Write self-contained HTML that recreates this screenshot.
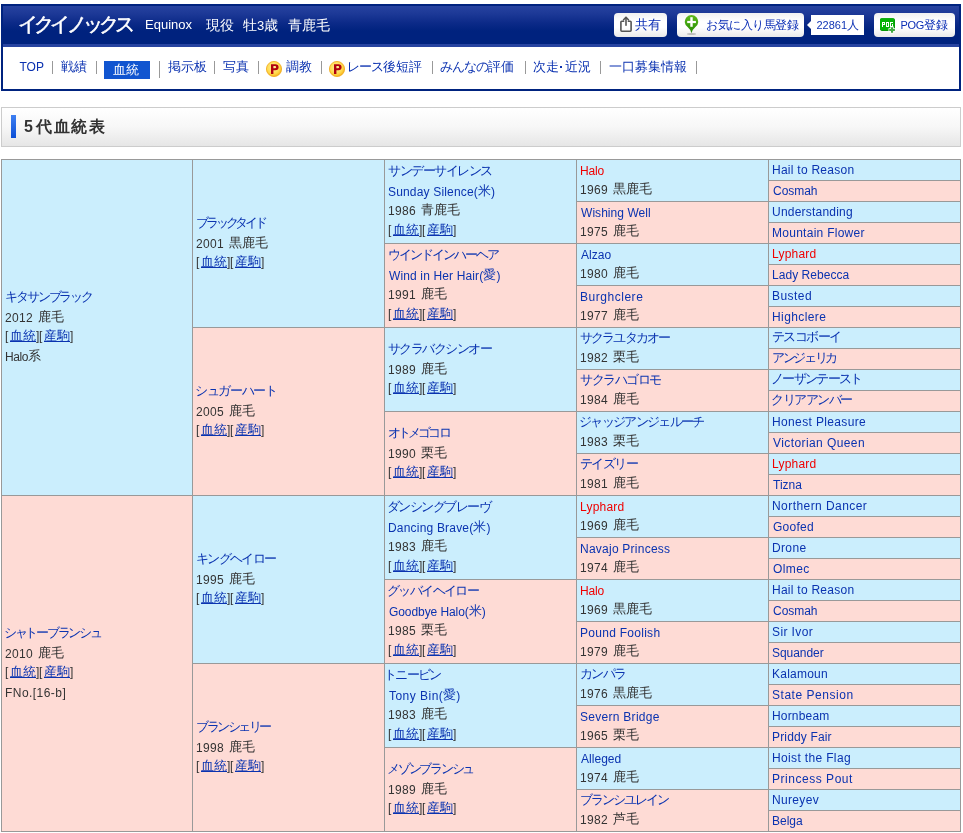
<!DOCTYPE html>
<html lang="ja">
<head>
<meta charset="utf-8">
<title>イクイノックス 5代血統表</title>
<style>
html,body{margin:0;padding:0;background:#fff;}
body{will-change:transform;width:963px;height:833px;position:relative;overflow:hidden;font-family:"Liberation Sans",sans-serif;font-size:13px;color:#333;}
*{box-sizing:border-box;}
a{text-decoration:none;}
.abs{position:absolute;white-space:nowrap;}

/* ---------- header ---------- */
#head{position:absolute;left:1px;top:4px;width:960px;height:87px;border:2px solid #00237f;background:#fff;}
#band{position:absolute;left:0;top:0;width:956px;height:38px;background:linear-gradient(#2743a0 0px,#1c3896 8px,#0c2a88 17px,#00227e 25px,#00227e 38px);}
#strip{position:absolute;left:0;top:38px;width:956px;height:3px;background:#2743a0;}
#title{left:15px;top:4.5px;height:26px;line-height:26px;font-size:20px;font-weight:normal;-webkit-text-stroke:0.55px #fff;color:#fff;letter-spacing:-3.8px;}
.sub{color:#fff;font-size:14px;height:20px;line-height:20px;top:9px;}
.sub.en{font-size:13px;}

.btn{position:absolute;top:7px;height:24px;border-radius:4px;background:linear-gradient(#f1f1f1 0%,#ffffff 35%,#ffffff 60%,#e9e9e9 100%);color:#0a2db5;white-space:nowrap;}
.btn > span{position:absolute;top:0;height:24px;line-height:24px;}
#balloon{position:absolute;left:808px;top:9px;width:53px;height:20px;background:#fff;color:#1035b5;}
#balloon:before{content:"";position:absolute;left:-4px;top:6px;border-style:solid;border-width:4px 4px 4px 0;border-color:transparent #fff transparent transparent;}
#balloon .bt{position:absolute;top:0;height:20px;line-height:20px;white-space:nowrap;}

/* ---------- nav ---------- */
.nv{position:absolute;top:51px;height:20px;line-height:20px;font-size:13px;color:#0a31b0;white-space:nowrap;}
.nv .k{letter-spacing:-1px;}
.sp{position:absolute;top:55px;width:1px;height:13px;background:#999;}
.dot{display:inline-block;width:6px;height:2px;vertical-align:3px;position:relative;}
.dot:before{content:"";position:absolute;left:1px;top:0;width:2px;height:2px;background:#0a31b0;}
#cur{position:absolute;left:101px;top:55px;width:46px;height:18px;background:#1155d0;color:#fff;font-size:13px;line-height:18px;text-align:center;padding-right:2px;}

/* ---------- section title ---------- */
#sec{position:absolute;left:1px;top:107px;width:960px;height:40px;border:1px solid #ccc;background:linear-gradient(#ffffff 0%,#f7f7f7 50%,#e6e6e6 100%);}
#bar{position:absolute;left:9px;top:7px;width:5px;height:23px;background:linear-gradient(#3f80f2,#0c4fd6);}
#sect,#sect2{left:22px;top:8px;height:22px;line-height:22px;font-size:16px;font-weight:bold;color:#333;}
#sect2{left:34px;letter-spacing:1.7px;}

/* ---------- table ---------- */
#ped{position:absolute;left:1px;top:159px;width:960px;border-collapse:collapse;table-layout:fixed;font-size:13px;line-height:19.5px;color:#333;}
#ped tr{height:21px;}
#ped td{border:1px solid #999;padding:0 0 0 4px;vertical-align:top;white-space:nowrap;overflow:hidden;}
#ped td.m{background:#cbeefd;}
#ped td.f{background:#fedbd5;}
#ped td.g0{width:191px;}
#ped td.g1,#ped td.g2,#ped td.g3,#ped td.g4{width:192px;}
#ped .a{color:#0a33b0;}
#ped .r{color:#f00000;}
#ped .u{text-decoration:underline;text-decoration-thickness:1px;text-underline-offset:1px;}
#ped .b{display:inline-block;width:4px;font-size:12px;line-height:1;position:relative;top:-1.5px;}
#ped .bl{text-indent:-1px;}
#ped .y{word-spacing:1px;margin-left:-1px;}
#ped .y .e{letter-spacing:0.3px;}
.e{font-size:12px;}
#ped .ln{height:19px;line-height:19px;}
#ped .ln a,#ped .ln span{line-height:1;}
#ped .k,#ped .j{position:relative;top:-1px;}
</style>
</head>
<body>

<div id="head">
  <div id="band"></div>
  <div id="strip"></div>
  <div id="title" class="abs">イクイノックス</div>
  <div class="abs sub en" style="left:142px;">Equinox</div>
  <div class="abs sub" style="left:203px;">現役</div>
  <div class="abs sub" style="left:240px;">牡<span style="font-size:13px">3</span>歳</div>
  <div class="abs sub" style="left:285px;">青鹿毛</div>

  <!-- share button -->
  <div class="btn" style="left:611px;width:53px;">
    <svg style="position:absolute;left:5px;top:3px" width="14" height="17" viewBox="0 0 14 17">
      <path d="M4.6 5.2 H2.8 Q1.9 5.2 1.9 6.1 V14.3 Q1.9 15.2 2.8 15.2 H11.2 Q12.1 15.2 12.1 14.3 V6.1 Q12.1 5.2 11.2 5.2 H9.4" fill="none" stroke="#555" stroke-width="1.6" stroke-linecap="round"/>
      <path d="M7 1.6 V9.2" fill="none" stroke="#555" stroke-width="1.6" stroke-linecap="round"/>
      <path d="M4.6 3.8 L7 1.3 L9.4 3.8" fill="none" stroke="#555" stroke-width="1.6" stroke-linecap="round" stroke-linejoin="round"/>
    </svg>
    <span style="left:20.5px;font-size:13px;">共有</span>
  </div>

  <!-- favourite button -->
  <div class="btn" style="left:674px;width:127px;">
    <svg style="position:absolute;left:6px;top:1px" width="17" height="22" viewBox="0 0 17 22">
      <defs><linearGradient id="gg" x1="0" y1="0" x2="0" y2="1"><stop offset="0" stop-color="#62bb1f"/><stop offset="0.6" stop-color="#3a9d0c"/><stop offset="1" stop-color="#2b8a06"/></linearGradient></defs>
      <ellipse cx="8.5" cy="20" rx="4.6" ry="1.1" fill="#bdbdbd"/>
      <path d="M8.5 19.2 Q7.6 15.6 4.6 13.1 A6.7 6.7 0 1 1 12.4 13.1 Q9.4 15.6 8.5 19.2 Z" fill="url(#gg)"/>
      <rect x="4.2" y="6.9" width="8.7" height="2.2" fill="#fff"/>
      <rect x="7.3" y="3.2" width="2.4" height="9.6" fill="#fff"/>
    </svg>
    <span style="left:29px;font-size:12px;letter-spacing:-0.5px;">お気に入り馬登録</span>
  </div>

  <div id="balloon"><span class="bt" style="left:5.5px;"><span style="font-size:11px;">22861</span><span style="font-size:12px;">人</span></span></div>

  <!-- POG button -->
  <div class="btn" style="left:871px;width:81px;">
    <svg style="position:absolute;left:6px;top:5px" width="17" height="16" viewBox="0 0 17 16"><rect x="0" y="0.2" width="15" height="12.7" rx="1.8" fill="#078f07"/><rect x="0" y="0.2" width="14.3" height="12" rx="1.6" fill="#07b307"/><g fill="#fff"><rect x="2" y="4" width="1" height="1"/><rect x="3" y="4" width="1" height="1"/><rect x="4" y="4" width="1" height="1"/><rect x="2" y="5" width="1" height="1"/><rect x="4" y="5" width="1" height="1"/><rect x="2" y="6" width="1" height="1"/><rect x="3" y="6" width="1" height="1"/><rect x="4" y="6" width="1" height="1"/><rect x="2" y="7" width="1" height="1"/><rect x="2" y="8" width="1" height="1"/><rect x="6" y="4" width="1" height="1"/><rect x="7" y="4" width="1" height="1"/><rect x="8" y="4" width="1" height="1"/><rect x="6" y="5" width="1" height="1"/><rect x="8" y="5" width="1" height="1"/><rect x="6" y="6" width="1" height="1"/><rect x="8" y="6" width="1" height="1"/><rect x="6" y="7" width="1" height="1"/><rect x="8" y="7" width="1" height="1"/><rect x="6" y="8" width="1" height="1"/><rect x="7" y="8" width="1" height="1"/><rect x="8" y="8" width="1" height="1"/><rect x="10" y="4" width="1" height="1"/><rect x="11" y="4" width="1" height="1"/><rect x="12" y="4" width="1" height="1"/><rect x="10" y="5" width="1" height="1"/><rect x="10" y="6" width="1" height="1"/><rect x="12" y="6" width="1" height="1"/><rect x="10" y="7" width="1" height="1"/><rect x="12" y="7" width="1" height="1"/><rect x="10" y="8" width="1" height="1"/><rect x="11" y="8" width="1" height="1"/><rect x="12" y="8" width="1" height="1"/></g><path d="M10.4 8.4 h3.3 v1.9 h1.9 v3.3 h-1.9 v1.9 h-3.3 v-1.9 h-1.9 v-3.3 h1.9 z" fill="#fff"/><path d="M11 9.2 h2.1 v1.7 h1.8 v2.1 h-1.8 v1.8 h-2.1 v-1.8 h-1.8 v-2.1 h1.8 z" fill="#3fa83f"/></svg>
    <span style="left:26.5px;font-size:12px;"><span style="font-size:11px;letter-spacing:-0.3px">POG</span>登録</span>
  </div>

  <!-- nav -->
  <div class="nv" style="left:16.5px;font-size:12px;">TOP</div>
  <div class="sp" style="left:49px;"></div>
  <div class="nv" style="left:58px;">戦績</div>
  <div class="sp" style="left:93px;"></div>
  <div id="cur">血統</div>
  <div class="sp" style="left:156px;height:17px;"></div>
  <div class="nv" style="left:165px;">掲示板</div>
  <div class="sp" style="left:211px;"></div>
  <div class="nv" style="left:220px;">写真</div>
  <div class="sp" style="left:255px;"></div>
  <svg class="pi" style="position:absolute;left:263px;top:55px" width="16" height="16" viewBox="0 0 16 16"><circle cx="8" cy="8" r="7.6" fill="url(#pg)" stroke="#f0a81a" stroke-width="0.8"/><path d="M5 3.2 H9.3 Q12.6 3.2 12.6 6.2 Q12.6 9.2 9.3 9.2 H7.4 V13 H5 Z M7.4 5.1 V7.3 H9 Q10.2 7.3 10.2 6.2 Q10.2 5.1 9 5.1 Z" fill="#b0000f" fill-rule="evenodd"/></svg>
  <div class="nv" style="left:283px;">調教</div>
  <div class="sp" style="left:318px;"></div>
  <svg class="pi" style="position:absolute;left:326px;top:55px" width="16" height="16" viewBox="0 0 16 16"><circle cx="8" cy="8" r="7.6" fill="url(#pg)" stroke="#f0a81a" stroke-width="0.8"/><path d="M5 3.2 H9.3 Q12.6 3.2 12.6 6.2 Q12.6 9.2 9.3 9.2 H7.4 V13 H5 Z M7.4 5.1 V7.3 H9 Q10.2 7.3 10.2 6.2 Q10.2 5.1 9 5.1 Z" fill="#b0000f" fill-rule="evenodd"/></svg>
  <div class="nv" style="left:343.5px;"><span class="k">レース</span>後短評</div>
  <div class="sp" style="left:429px;"></div>
  <div class="nv" style="left:437px;"><span class="k">みんなの</span>評価</div>
  <div class="sp" style="left:522px;"></div>
  <div class="nv" style="left:530px;">次走<i class="dot"></i>近況</div>
  <div class="sp" style="left:597px;"></div>
  <div class="nv" style="left:606px;">一口募集情報</div>
  <div class="sp" style="left:693px;"></div>
</div>

<svg width="0" height="0" style="position:absolute">
  <defs>
    <radialGradient id="pg" cx="0.45" cy="0.4" r="0.6"><stop offset="0" stop-color="#fff3a0"/><stop offset="0.7" stop-color="#ffd84a"/><stop offset="1" stop-color="#f6b21c"/></radialGradient>
    
  </defs>
</svg>

<div id="sec">
  <div id="bar"></div>
  <div id="sect" class="abs">5</div><div id="sect2" class="abs">代血統表</div>
</div>

<table id="ped">
<tr><td class="m g0" rowspan="16"><div class="ln" style="margin-top:128px"><a class="a" style="margin-left:-1px"><span class="k" style="letter-spacing:-2.11px">キタサンブラック</span></a></div><div class="ln" style="margin-top:1px"><span class="y"><span class="e">2012 </span><span class="j">鹿毛</span></span></div><div class="ln"><span class="b bl">[</span><a class="a u j">血統</a><span class="b">]</span><span class="b bl">[</span><a class="a u j">産駒</a><span class="b">]</span></div><div class="ln" style="margin-top:1px"><span style="margin-left:-1px"><span class="e" style="letter-spacing:-0.4px">Halo</span><span class="j">系</span></span></div></td><td class="m g1" rowspan="8"><div class="ln" style="margin-top:54px"><a class="a" style="margin-left:-1px"><span class="k" style="letter-spacing:-3.13px">ブラックタイド</span></a></div><div class="ln" style="margin-top:1px"><span class="y"><span class="e">2001 </span><span class="j">黒鹿毛</span></span></div><div class="ln"><span class="b bl">[</span><a class="a u j">血統</a><span class="b">]</span><span class="b bl">[</span><a class="a u j">産駒</a><span class="b">]</span></div></td><td class="m g2" rowspan="4"><div class="ln" style="margin-top:2px"><a class="a" style="margin-left:-1px"><span class="k" style="letter-spacing:-1.45px">サンデーサイレンス</span></a></div><div class="ln" style="margin-top:1px"><a class="a" style="margin-left:-1px"><span class="e" style="letter-spacing:0.17px">Sunday Silence(</span><span class="j">米</span><span class="e">)</span></a></div><div class="ln"><span class="y"><span class="e">1986 </span><span class="j">青鹿毛</span></span></div><div class="ln" style="margin-top:1px"><span class="b bl">[</span><a class="a u j">血統</a><span class="b">]</span><span class="b bl">[</span><a class="a u j">産駒</a><span class="b">]</span></div></td><td class="m g3" rowspan="2"><div class="ln" style="margin-top:1px"><a class="r" style="margin-left:-1px"><span class="e" style="letter-spacing:-0.2px">Halo</span></a></div><div class="ln"><span class="y"><span class="e">1969 </span><span class="j">黒鹿毛</span></span></div></td><td class="m g4"><div class="ln"><a class="a" style="margin-left:-1px"><span class="e" style="letter-spacing:0.26px">Hail to Reason</span></a></div></td></tr>
<tr><td class="f g4"><div class="ln"><a class="a"><span class="e" style="letter-spacing:-0.04px">Cosmah</span></a></div></td></tr>
<tr><td class="f g3" rowspan="2"><div class="ln" style="margin-top:1px"><a class="a"><span class="e" style="letter-spacing:0.05px">Wishing Well</span></a></div><div class="ln"><span class="y"><span class="e">1975 </span><span class="j">鹿毛</span></span></div></td><td class="m g4"><div class="ln"><a class="a" style="margin-left:-1px"><span class="e" style="letter-spacing:0.22px">Understanding</span></a></div></td></tr>
<tr><td class="f g4"><div class="ln"><a class="a" style="margin-left:-1px"><span class="e" style="letter-spacing:0.27px">Mountain Flower</span></a></div></td></tr>
<tr><td class="f g2" rowspan="4"><div class="ln" style="margin-top:2px"><a class="a" style="margin-left:-1px"><span class="k" style="letter-spacing:-1.96px">ウインドインハーヘア</span></a></div><div class="ln" style="margin-top:1px"><a class="a"><span class="e" style="letter-spacing:0.14px">Wind in Her Hair(</span><span class="j">愛</span><span class="e">)</span></a></div><div class="ln"><span class="y"><span class="e">1991 </span><span class="j">鹿毛</span></span></div><div class="ln" style="margin-top:1px"><span class="b bl">[</span><a class="a u j">血統</a><span class="b">]</span><span class="b bl">[</span><a class="a u j">産駒</a><span class="b">]</span></div></td><td class="m g3" rowspan="2"><div class="ln" style="margin-top:1px"><a class="a"><span class="e" style="letter-spacing:0.05px">Alzao</span></a></div><div class="ln"><span class="y"><span class="e">1980 </span><span class="j">鹿毛</span></span></div></td><td class="m g4"><div class="ln"><a class="r" style="margin-left:-1px"><span class="e" style="letter-spacing:0.2px">Lyphard</span></a></div></td></tr>
<tr><td class="f g4"><div class="ln"><a class="a" style="margin-left:-1px"><span class="e" style="letter-spacing:0.04px">Lady Rebecca</span></a></div></td></tr>
<tr><td class="f g3" rowspan="2"><div class="ln" style="margin-top:1px"><a class="a" style="margin-left:-1px"><span class="e" style="letter-spacing:0.53px">Burghclere</span></a></div><div class="ln"><span class="y"><span class="e">1977 </span><span class="j">鹿毛</span></span></div></td><td class="m g4"><div class="ln"><a class="a" style="margin-left:-1px"><span class="e" style="letter-spacing:0.44px">Busted</span></a></div></td></tr>
<tr><td class="f g4"><div class="ln"><a class="a" style="margin-left:-1px"><span class="e" style="letter-spacing:0.4px">Highclere</span></a></div></td></tr>
<tr><td class="f g1" rowspan="8"><div class="ln" style="margin-top:54px"><a class="a" style="margin-left:-2px"><span class="k" style="letter-spacing:-1.33px">シュガーハート</span></a></div><div class="ln" style="margin-top:1px"><span class="y"><span class="e">2005 </span><span class="j">鹿毛</span></span></div><div class="ln"><span class="b bl">[</span><a class="a u j">血統</a><span class="b">]</span><span class="b bl">[</span><a class="a u j">産駒</a><span class="b">]</span></div></td><td class="m g2" rowspan="4"><div class="ln" style="margin-top:12px"><a class="a" style="margin-left:-1px"><span class="k" style="letter-spacing:-1.52px">サクラバクシンオー</span></a></div><div class="ln" style="margin-top:1px"><span class="y"><span class="e">1989 </span><span class="j">鹿毛</span></span></div><div class="ln"><span class="b bl">[</span><a class="a u j">血統</a><span class="b">]</span><span class="b bl">[</span><a class="a u j">産駒</a><span class="b">]</span></div></td><td class="m g3" rowspan="2"><div class="ln" style="margin-top:1px"><a class="a" style="margin-left:-1px"><span class="k" style="letter-spacing:-1.86px">サクラユタカオー</span></a></div><div class="ln"><span class="y"><span class="e">1982 </span><span class="j">栗毛</span></span></div></td><td class="m g4"><div class="ln"><a class="a" style="margin-left:-1px"><span class="k" style="letter-spacing:-1.52px">テスコボーイ</span></a></div></td></tr>
<tr><td class="f g4"><div class="ln"><a class="a" style="margin-left:-1px"><span class="k" style="letter-spacing:-2.36px">アンジェリカ</span></a></div></td></tr>
<tr><td class="f g3" rowspan="2"><div class="ln" style="margin-top:1px"><a class="a" style="margin-left:-1px"><span class="k" style="letter-spacing:-1.43px">サクラハゴロモ</span></a></div><div class="ln"><span class="y"><span class="e">1984 </span><span class="j">鹿毛</span></span></div></td><td class="m g4"><div class="ln"><a class="a" style="margin-left:-2px"><span class="k" style="letter-spacing:-1.69px">ノーザンテースト</span></a></div></td></tr>
<tr><td class="f g4"><div class="ln"><a class="a" style="margin-left:-2px"><span class="k" style="letter-spacing:-1.47px">クリアアンバー</span></a></div></td></tr>
<tr><td class="f g2" rowspan="4"><div class="ln" style="margin-top:12px"><a class="a" style="margin-left:-1px"><span class="k" style="letter-spacing:-2.88px">オトメゴコロ</span></a></div><div class="ln" style="margin-top:1px"><span class="y"><span class="e">1990 </span><span class="j">栗毛</span></span></div><div class="ln"><span class="b bl">[</span><a class="a u j">血統</a><span class="b">]</span><span class="b bl">[</span><a class="a u j">産駒</a><span class="b">]</span></div></td><td class="m g3" rowspan="2"><div class="ln" style="margin-top:1px"><a class="a" style="margin-left:-2px"><span class="k" style="letter-spacing:-1.66px">ジャッジアンジェルーチ</span></a></div><div class="ln"><span class="y"><span class="e">1983 </span><span class="j">栗毛</span></span></div></td><td class="m g4"><div class="ln"><a class="a" style="margin-left:-1px"><span class="e" style="letter-spacing:0.36px">Honest Pleasure</span></a></div></td></tr>
<tr><td class="f g4"><div class="ln"><a class="a"><span class="e" style="letter-spacing:0.41px">Victorian Queen</span></a></div></td></tr>
<tr><td class="f g3" rowspan="2"><div class="ln" style="margin-top:1px"><a class="a" style="margin-left:-1px"><span class="k" style="letter-spacing:-1.55px">テイズリー</span></a></div><div class="ln"><span class="y"><span class="e">1981 </span><span class="j">鹿毛</span></span></div></td><td class="m g4"><div class="ln"><a class="r" style="margin-left:-1px"><span class="e" style="letter-spacing:0.2px">Lyphard</span></a></div></td></tr>
<tr><td class="f g4"><div class="ln"><a class="a"><span class="e">Tizna</span></a></div></td></tr>
<tr><td class="f g0" rowspan="16"><div class="ln" style="margin-top:128px"><a class="a" style="margin-left:-2px"><span class="k" style="letter-spacing:-2.27px">シャトーブランシュ</span></a></div><div class="ln" style="margin-top:1px"><span class="y"><span class="e">2010 </span><span class="j">鹿毛</span></span></div><div class="ln"><span class="b bl">[</span><a class="a u j">血統</a><span class="b">]</span><span class="b bl">[</span><a class="a u j">産駒</a><span class="b">]</span></div><div class="ln" style="margin-top:1px"><span style="margin-left:-1px"><span class="e" style="letter-spacing:0.45px">FNo.[16-b]</span></span></div></td><td class="m g1" rowspan="8"><div class="ln" style="margin-top:54px"><a class="a" style="margin-left:-1px"><span class="k" style="letter-spacing:-1.67px">キングヘイロー</span></a></div><div class="ln" style="margin-top:1px"><span class="y"><span class="e">1995 </span><span class="j">鹿毛</span></span></div><div class="ln"><span class="b bl">[</span><a class="a u j">血統</a><span class="b">]</span><span class="b bl">[</span><a class="a u j">産駒</a><span class="b">]</span></div></td><td class="m g2" rowspan="4"><div class="ln" style="margin-top:2px"><a class="a" style="margin-left:-2px"><span class="k" style="letter-spacing:-1.52px">ダンシングブレーヴ</span></a></div><div class="ln" style="margin-top:1px"><a class="a" style="margin-left:-1px"><span class="e" style="letter-spacing:0.19px">Dancing Brave(</span><span class="j">米</span><span class="e">)</span></a></div><div class="ln"><span class="y"><span class="e">1983 </span><span class="j">鹿毛</span></span></div><div class="ln" style="margin-top:1px"><span class="b bl">[</span><a class="a u j">血統</a><span class="b">]</span><span class="b bl">[</span><a class="a u j">産駒</a><span class="b">]</span></div></td><td class="m g3" rowspan="2"><div class="ln" style="margin-top:1px"><a class="r" style="margin-left:-1px"><span class="e" style="letter-spacing:0.2px">Lyphard</span></a></div><div class="ln"><span class="y"><span class="e">1969 </span><span class="j">鹿毛</span></span></div></td><td class="m g4"><div class="ln"><a class="a" style="margin-left:-1px"><span class="e" style="letter-spacing:0.44px">Northern Dancer</span></a></div></td></tr>
<tr><td class="f g4"><div class="ln"><a class="a"><span class="e" style="letter-spacing:0.24px">Goofed</span></a></div></td></tr>
<tr><td class="f g3" rowspan="2"><div class="ln" style="margin-top:1px"><a class="a" style="margin-left:-1px"><span class="e" style="letter-spacing:0.24px">Navajo Princess</span></a></div><div class="ln"><span class="y"><span class="e">1974 </span><span class="j">鹿毛</span></span></div></td><td class="m g4"><div class="ln"><a class="a" style="margin-left:-1px"><span class="e" style="letter-spacing:0.35px">Drone</span></a></div></td></tr>
<tr><td class="f g4"><div class="ln"><a class="a"><span class="e" style="letter-spacing:0.4px">Olmec</span></a></div></td></tr>
<tr><td class="f g2" rowspan="4"><div class="ln" style="margin-top:2px"><a class="a" style="margin-left:-2px"><span class="k" style="letter-spacing:-1.6px">グッバイヘイロー</span></a></div><div class="ln" style="margin-top:1px"><a class="a"><span class="e" style="letter-spacing:-0.08px">Goodbye Halo(</span><span class="j">米</span><span class="e">)</span></a></div><div class="ln"><span class="y"><span class="e">1985 </span><span class="j">栗毛</span></span></div><div class="ln" style="margin-top:1px"><span class="b bl">[</span><a class="a u j">血統</a><span class="b">]</span><span class="b bl">[</span><a class="a u j">産駒</a><span class="b">]</span></div></td><td class="m g3" rowspan="2"><div class="ln" style="margin-top:1px"><a class="r" style="margin-left:-1px"><span class="e" style="letter-spacing:-0.2px">Halo</span></a></div><div class="ln"><span class="y"><span class="e">1969 </span><span class="j">黒鹿毛</span></span></div></td><td class="m g4"><div class="ln"><a class="a" style="margin-left:-1px"><span class="e" style="letter-spacing:0.26px">Hail to Reason</span></a></div></td></tr>
<tr><td class="f g4"><div class="ln"><a class="a"><span class="e" style="letter-spacing:-0.04px">Cosmah</span></a></div></td></tr>
<tr><td class="f g3" rowspan="2"><div class="ln" style="margin-top:1px"><a class="a" style="margin-left:-1px"><span class="e" style="letter-spacing:0.28px">Pound Foolish</span></a></div><div class="ln"><span class="y"><span class="e">1979 </span><span class="j">鹿毛</span></span></div></td><td class="m g4"><div class="ln"><a class="a" style="margin-left:-1px"><span class="e" style="letter-spacing:0.4px">Sir Ivor</span></a></div></td></tr>
<tr><td class="f g4"><div class="ln"><a class="a" style="margin-left:-1px"><span class="e" style="letter-spacing:-0.06px">Squander</span></a></div></td></tr>
<tr><td class="f g1" rowspan="8"><div class="ln" style="margin-top:54px"><a class="a" style="margin-left:-1px"><span class="k" style="letter-spacing:-2.43px">ブランシェリー</span></a></div><div class="ln" style="margin-top:1px"><span class="y"><span class="e">1998 </span><span class="j">鹿毛</span></span></div><div class="ln"><span class="b bl">[</span><a class="a u j">血統</a><span class="b">]</span><span class="b bl">[</span><a class="a u j">産駒</a><span class="b">]</span></div></td><td class="m g2" rowspan="4"><div class="ln" style="margin-top:2px"><a class="a" style="margin-left:-5px"><span class="k" style="letter-spacing:-1.75px">トニービン</span></a></div><div class="ln" style="margin-top:1px"><a class="a"><span class="e" style="letter-spacing:0.47px">Tony Bin(</span><span class="j">愛</span><span class="e">)</span></a></div><div class="ln"><span class="y"><span class="e">1983 </span><span class="j">鹿毛</span></span></div><div class="ln" style="margin-top:1px"><span class="b bl">[</span><a class="a u j">血統</a><span class="b">]</span><span class="b bl">[</span><a class="a u j">産駒</a><span class="b">]</span></div></td><td class="m g3" rowspan="2"><div class="ln" style="margin-top:1px"><a class="a" style="margin-left:-1px"><span class="k" style="letter-spacing:-1.6px">カンパラ</span></a></div><div class="ln"><span class="y"><span class="e">1976 </span><span class="j">黒鹿毛</span></span></div></td><td class="m g4"><div class="ln"><a class="a" style="margin-left:-1px"><span class="e" style="letter-spacing:0.23px">Kalamoun</span></a></div></td></tr>
<tr><td class="f g4"><div class="ln"><a class="a" style="margin-left:-1px"><span class="e" style="letter-spacing:0.53px">State Pension</span></a></div></td></tr>
<tr><td class="f g3" rowspan="2"><div class="ln" style="margin-top:1px"><a class="a" style="margin-left:-1px"><span class="e" style="letter-spacing:0.28px">Severn Bridge</span></a></div><div class="ln"><span class="y"><span class="e">1965 </span><span class="j">栗毛</span></span></div></td><td class="m g4"><div class="ln"><a class="a" style="margin-left:-1px"><span class="e" style="letter-spacing:0.17px">Hornbeam</span></a></div></td></tr>
<tr><td class="f g4"><div class="ln"><a class="a" style="margin-left:-1px"><span class="e" style="letter-spacing:0.16px">Priddy Fair</span></a></div></td></tr>
<tr><td class="f g2" rowspan="4"><div class="ln" style="margin-top:12px"><a class="a" style="margin-left:-2px"><span class="k" style="letter-spacing:-2.23px">メゾンブランシュ</span></a></div><div class="ln" style="margin-top:1px"><span class="y"><span class="e">1989 </span><span class="j">鹿毛</span></span></div><div class="ln"><span class="b bl">[</span><a class="a u j">血統</a><span class="b">]</span><span class="b bl">[</span><a class="a u j">産駒</a><span class="b">]</span></div></td><td class="m g3" rowspan="2"><div class="ln" style="margin-top:1px"><a class="a"><span class="e" style="letter-spacing:0.03px">Alleged</span></a></div><div class="ln"><span class="y"><span class="e">1974 </span><span class="j">鹿毛</span></span></div></td><td class="m g4"><div class="ln"><a class="a" style="margin-left:-1px"><span class="e" style="letter-spacing:0.35px">Hoist the Flag</span></a></div></td></tr>
<tr><td class="f g4"><div class="ln"><a class="a" style="margin-left:-1px"><span class="e" style="letter-spacing:0.53px">Princess Pout</span></a></div></td></tr>
<tr><td class="f g3" rowspan="2"><div class="ln" style="margin-top:1px"><a class="a" style="margin-left:-1px"><span class="k" style="letter-spacing:-2.06px">ブランシユレイン</span></a></div><div class="ln"><span class="y"><span class="e">1982 </span><span class="j">芦毛</span></span></div></td><td class="m g4"><div class="ln"><a class="a" style="margin-left:-1px"><span class="e" style="letter-spacing:0.33px">Nureyev</span></a></div></td></tr>
<tr><td class="f g4"><div class="ln"><a class="a" style="margin-left:-1px"><span class="e">Belga</span></a></div></td></tr>
</table>

</body>
</html>
